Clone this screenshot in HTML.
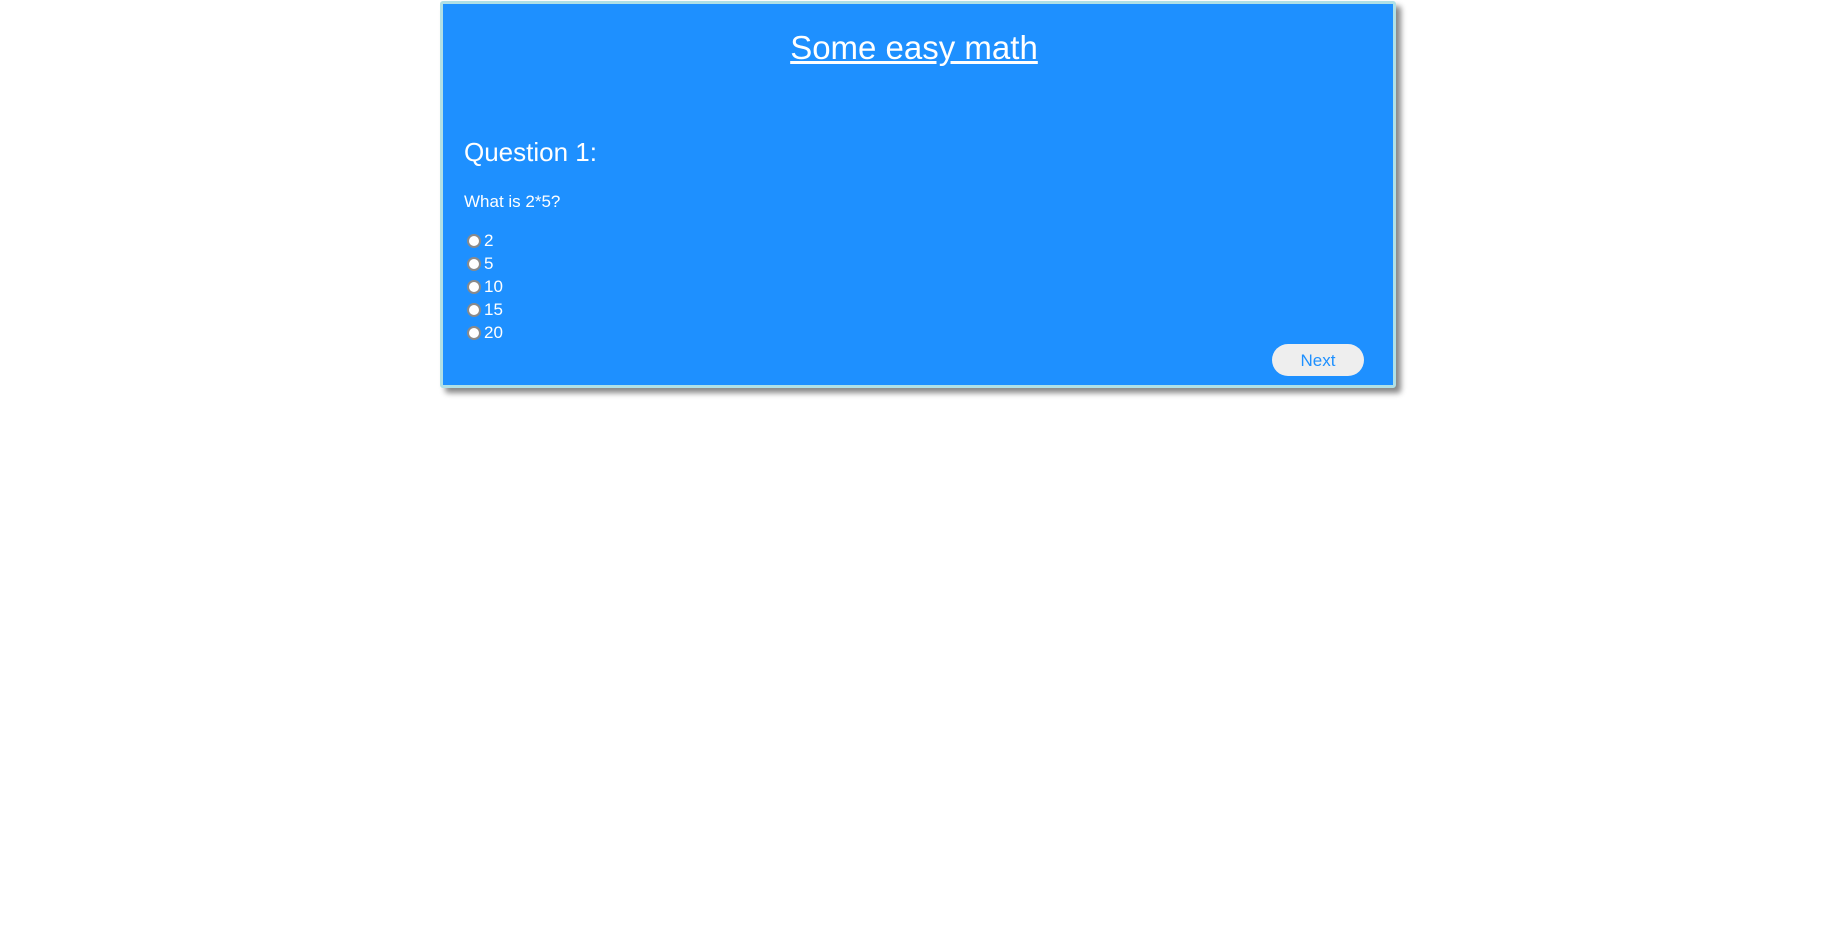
<!DOCTYPE html>
<html><head><style>
html,body{margin:0;padding:0;background:#fff;width:1836px;height:945px;overflow:hidden;font-family:"Liberation Sans",sans-serif;color:#fff}
.box{position:absolute;left:440px;top:1px;width:950px;height:381px;background:#1e90ff;border:3px solid #b0e0e6;border-radius:3px;box-shadow:5px 5px 6px #888}
.t{position:absolute;left:-4px;width:100%;top:22px;text-align:center;font-size:33px;text-decoration:underline;line-height:44px}
.q{position:absolute;left:21px;top:132px;font-size:26px;line-height:32px}
.w{position:absolute;left:21px;top:187px;font-size:17px;line-height:22px}
.r{position:absolute;left:24px;font-size:17px;line-height:22px;height:22px}
.r i{display:inline-block;width:10px;height:10px;border:2px solid #8a8a8a;border-radius:50%;background:#fff;vertical-align:middle;margin-right:3px;position:relative;top:-1px}
.n{position:absolute;left:829px;top:340px;width:92px;height:32px;border-radius:16px;background:#eeeeee;color:#1e90ff;font-size:17px;line-height:34px;text-align:center}
</style></head><body>
<div class="box">
<div class="t">Some easy math</div>
<div class="q">Question 1:</div>
<div class="w">What is 2*5?</div>
<div class="r" style="top:226px"><i></i>2</div>
<div class="r" style="top:249px"><i></i>5</div>
<div class="r" style="top:272px"><i></i>10</div>
<div class="r" style="top:295px"><i></i>15</div>
<div class="r" style="top:318px"><i></i>20</div>
<div class="n">Next</div>
</div>
</body></html>
